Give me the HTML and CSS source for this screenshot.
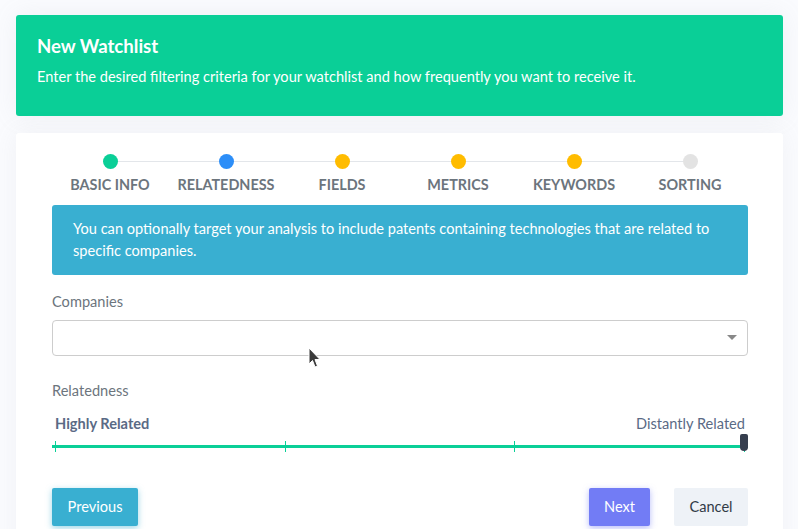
FILE: index.html
```html
<!DOCTYPE html>
<html lang="en">
<head>
<meta charset="utf-8">
<title>New Watchlist</title>
<link rel="stylesheet" href="styles.css">
</head>
<body>
<div class="page">
  <header class="banner">
    <h1 class="banner-title">New Watchlist</h1>
    <p class="banner-text">Enter the desired filtering criteria for your watchlist and how frequently you want to receive it.</p>
  </header>

  <section class="card">
    <ol class="steps">
      <li class="step done"><span class="dot"></span><span class="step-label">Basic Info</span></li>
      <li class="step current"><span class="dot"></span><span class="step-label">Relatedness</span></li>
      <li class="step todo"><span class="dot"></span><span class="step-label">Fields</span></li>
      <li class="step todo"><span class="dot"></span><span class="step-label">Metrics</span></li>
      <li class="step todo"><span class="dot"></span><span class="step-label">Keywords</span></li>
      <li class="step off"><span class="dot"></span><span class="step-label">Sorting</span></li>
    </ol>

    <div class="alert">You can optionally target your analysis to include patents containing technologies that are related to specific companies.</div>

    <label class="field-label">Companies</label>
    <div class="select">
      <span class="caret"></span>
      <svg class="cursor" width="14" height="22" viewBox="0 0 14 22"><path d="M1 1 L1 17 L4.5 13.5 L7 20 L9.5 19 L7 12.5 L12 12.5 Z" fill="#3a3a3a" stroke="#fff" stroke-width="1"/></svg>
    </div>

    <label class="field-label rel-label">Relatedness</label>
    <div class="range-labels">
      <span class="range-min">Highly Related</span>
      <span class="range-max">Distantly Related</span>
    </div>
    <div class="slider">
      <div class="ticks">
        <span class="tick"></span><span class="tick"></span><span class="tick"></span><span class="tick"></span>
      </div>
      <span class="handle"></span>
    </div>

    <div class="actions">
      <button class="btn btn-info">Previous</button>
      <div class="actions-right">
        <button class="btn btn-primary">Next</button>
        <button class="btn btn-light">Cancel</button>
      </div>
    </div>
  </section>
</div>
</body>
</html>
```

FILE: styles.css
```css
* { box-sizing: border-box; }
html, body { margin: 0; padding: 0; }
body {
  background: #fafbfe;
  font-family: "Lato", "Noto Sans", sans-serif;
  font-size: 14.6px;
  color: #6c757d;
  width: 798px;
  height: 529px;
  overflow: hidden;
}
.page {
  padding: 15px 15px 0 16px;
  display: flex;
  flex-direction: column;
  gap: 17px;
}
.banner {
  background: #0acf97;
  border-radius: 3px;
  height: 101px;
  padding: 21px 21px 0 21px;
  color: #fff;
  box-shadow: 0 0 24px rgba(154,161,171,0.12);
}
.banner-title {
  margin: 0;
  font-size: 18.6px;
  font-weight: 700;
  line-height: 20px;
}
.banner-text {
  margin: 11px 0 0 0;
  font-size: 14.6px;
  line-height: 20px;
}
.card {
  background: #fff;
  border-radius: 3px;
  padding: 21px 35px 0 36px;
  height: 420px;
  box-shadow: 0 0 24px rgba(154,161,171,0.10);
}
.steps {
  list-style: none;
  margin: 0;
  padding: 0;
  display: grid;
  grid-template-columns: repeat(6, 1fr);
}
.step {
  position: relative;
  display: flex;
  flex-direction: column;
  align-items: center;
  gap: 7px;
}
.step::before {
  content: "";
  position: absolute;
  top: 7px;
  left: 50%;
  width: 100%;
  height: 1px;
  background: #e3e6ea;
}
.step:last-child::before { display: none; }
.dot {
  position: relative;
  width: 15px;
  height: 15px;
  border-radius: 50%;
  background: #e3e3e3;
}
.done .dot { background: #0acf97; }
.current .dot { background: #2c8ef8; }
.todo .dot { background: #ffbc00; }
.step-label {
  text-transform: uppercase;
  font-weight: 700;
  font-size: 14.4px;
  line-height: 18px;
  color: #6c757d;
}
.alert {
  margin-top: 11px;
  background: #39afd1;
  border-radius: 3px;
  color: #fff;
  padding: 13px 21px 13px 21px;
  line-height: 22px;
}
.field-label {
  display: block;
  margin-top: 17px;
  line-height: 20px;
  color: #6c757d;
}
.select {
  position: relative;
  margin-top: 8px;
  height: 36px;
  border: 1px solid #cdcdcd;
  border-radius: 4px;
  background: #fff;
}
.caret {
  position: absolute;
  right: 10px;
  top: 14px;
  width: 0;
  height: 0;
  border-left: 5px solid transparent;
  border-right: 5px solid transparent;
  border-top: 5px solid #888;
}
.cursor {
  position: absolute;
  left: 255px;
  top: 26px;
}
.rel-label { margin-top: 25px; }
.range-labels {
  margin-top: 14px;
  display: flex;
  justify-content: space-between;
  padding: 0 3px;
  line-height: 18px;
  color: #5a6a85;
}
.range-min { font-weight: 700; }
.slider {
  position: relative;
  margin-top: 1px;
  height: 18px;
}
.ticks {
  position: absolute;
  left: 0;
  right: 0;
  top: 11px;
  height: 3px;
  background: #0acf97;
  display: flex;
  justify-content: space-between;
  padding: 0 3px;
}
.tick {
  width: 1px;
  height: 11px;
  margin-top: -4px;
  background: #0acf97;
}
.handle {
  position: absolute;
  right: 0;
  top: 0;
  width: 8px;
  height: 17px;
  background: #363e4e;
  border-radius: 2px 2px 4px 4px;
}
.actions {
  margin-top: 36px;
  display: flex;
  justify-content: space-between;
}
.actions-right {
  display: flex;
  gap: 24px;
}
.btn {
  font-family: inherit;
  font-size: 14.6px;
  border: none;
  border-radius: 2px;
  height: 38px;
  padding: 0;
  line-height: 38px;
}
.btn-info {
  background: #39afd1;
  color: #fff;
  box-shadow: 0 2px 6px 0 rgba(57,175,209,0.5);
  width: 86px;
}
.btn-primary {
  background: #727cf5;
  color: #fff;
  box-shadow: 0 2px 6px 0 rgba(114,124,245,0.5);
  width: 61px;
}
.btn-light {
  background: #eef2f7;
  color: #313a46;
  width: 74px;
}
```
